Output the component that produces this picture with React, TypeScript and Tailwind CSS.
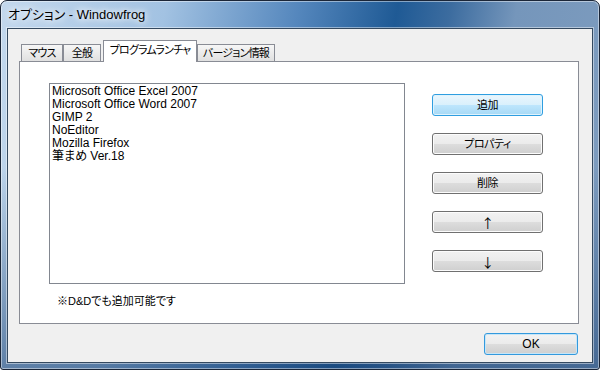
import React from 'react';

const items = [
  'Microsoft Office Excel 2007',
  'Microsoft Office Word 2007',
  'GIMP 2',
  'NoEditor',
  'Mozilla Firefox',
  '筆まめ Ver.18',
];

const btn =
  'h-[22px] rounded-[3px] border border-[#707070] shadow-[inset_0_0_0_1px_#fcfcfc] bg-[linear-gradient(#f2f2f2_0%,#ebebeb_50%,#dddddd_50%,#cfcfcf_100%)] text-[11px] tracking-[-0.5px] text-black flex items-center justify-center whitespace-nowrap';

const hotBtn =
  'h-[22px] rounded-[3px] border border-[#2f9ee0] shadow-[inset_0_0_0_1px_#dff3fd] bg-[linear-gradient(#eaf6fd_0%,#d9f0fc_50%,#bee6fd_50%,#a7d9f5_100%)] text-[11px] tracking-[-0.5px] text-black flex items-center justify-center whitespace-nowrap';

const arrow = "font-['Noto_Sans_CJK_JP',sans-serif] text-[13px] leading-none";

const tabIdle =
  'h-[17px] border-t border-x border-[#898c95] bg-[linear-gradient(#f6f6f6,#e0e0e0)] text-[11px] tracking-[-0.8px] whitespace-nowrap flex items-center justify-center';

const App: React.FC = () => {
  return (
    <div className="w-[600px] h-[370px] bg-white font-['Liberation_Sans','Noto_Sans_CJK_JP',sans-serif] [font-feature-settings:'palt'] text-black">
      <div className="w-[600px] h-[370px] flex flex-col rounded-t-[7px] rounded-b-[3px] border border-[#1b2638] shadow-[inset_0_0_0_1px_rgba(255,255,255,0.45)] bg-[linear-gradient(to_bottom,rgba(0,0,0,0)_45%,rgba(22,62,112,0.55)_100%),linear-gradient(100deg,#c3d8ed_0%,#a2c2e2_25%,#5587bd_45%,#1f5a95_60%,#3c6c9f_68%,#7596bb_78%,#7f9dbf_100%)] px-[6px] pb-[6px]">
        <div className="h-[27px] flex items-center pl-[1px] text-[13px] [text-shadow:0_0_6px_#fff,0_0_10px_#fff]">
          オプション - Windowfrog
        </div>
        <div className="flex-1 border border-[#34495f] shadow-[0_0_0_1px_rgba(255,255,255,0.45)] bg-[#f0f0f0] pl-[11px] pr-[13px] pt-[11px] flex flex-col">
          <div className="flex items-end h-[21px] pl-[2px]">
            <div className={`${tabIdle} w-[42px]`}>マウス</div>
            <div className={`${tabIdle} w-[38px]`}>全般</div>
            <div className="ml-[2px] w-[94px] h-[22px] -mb-px relative z-10 border-t border-x border-[#898c95] bg-white text-[11px] tracking-[-0.8px] whitespace-nowrap flex items-center justify-center pb-[2px]">
              プログラムランチャ
            </div>
            <div className={`${tabIdle} w-[78px]`}>バージョン情報</div>
          </div>
          <div className="h-[263px] border border-[#898c95] bg-white flex flex-col pt-[21px] pl-[29px]">
            <div className="flex">
              <div className="w-[356px] h-[201px] border border-[#828790] bg-white pl-[2px] pt-px text-[12px] leading-[13px]">
                {items.map((it) => (
                  <div key={it}>{it}</div>
                ))}
              </div>
              <div className="ml-[27px] pt-[11px] flex flex-col gap-[17px] w-[111px]">
                <div className={hotBtn}>追加</div>
                <div className={btn}>プロパティ</div>
                <div className={btn}>削除</div>
                <div className={btn}>
                  <span className={arrow}>↑</span>
                </div>
                <div className={btn}>
                  <span className={arrow}>↓</span>
                </div>
              </div>
            </div>
            <div className="mt-[10px] ml-[8px] text-[11px] leading-[14px]">※D&amp;Dでも追加可能です</div>
          </div>
          <div className="mt-[9px] flex justify-end pr-[1px]">
            <div className="w-[94px] h-[22px] rounded-[3px] border border-[#3399dd] shadow-[inset_0_0_0_1px_#c6e6f8] bg-[linear-gradient(#f2f2f2_0%,#ebebeb_50%,#dddddd_50%,#cfcfcf_100%)] text-[12px] flex items-center justify-center">
              OK
            </div>
          </div>
        </div>
      </div>
    </div>
  );
};

export default App;
